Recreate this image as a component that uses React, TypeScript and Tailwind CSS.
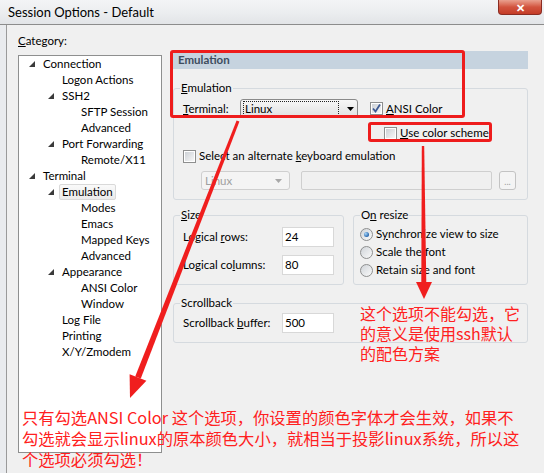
import React from "react";

const UI = "font-['Lato',sans-serif]";

function Tri() {
  return (
    <svg width="6" height="6" viewBox="0 0 6 6" className="block">
      <polygon points="6,0 6,6 0,6" fill="#3a3a3a" />
    </svg>
  );
}

type Item = { t: string; l: number; e?: boolean; sel?: boolean };
const items: Item[] = [
  { t: "Connection", l: 0, e: true },
  { t: "Logon Actions", l: 1 },
  { t: "SSH2", l: 1, e: true },
  { t: "SFTP Session", l: 2 },
  { t: "Advanced", l: 2 },
  { t: "Port Forwarding", l: 1, e: true },
  { t: "Remote/X11", l: 2 },
  { t: "Terminal", l: 0, e: true },
  { t: "Emulation", l: 1, e: true, sel: true },
  { t: "Modes", l: 2 },
  { t: "Emacs", l: 2 },
  { t: "Mapped Keys", l: 2 },
  { t: "Advanced", l: 2 },
  { t: "Appearance", l: 1, e: true },
  { t: "ANSI Color", l: 2 },
  { t: "Window", l: 2 },
  { t: "Log File", l: 1 },
  { t: "Printing", l: 1 },
  { t: "X/Y/Zmodem", l: 1 },
];

const indent = ["w-[10px]", "w-[29px]", "w-[48px]"];

function Check({ checked = false }: { checked?: boolean }) {
  return (
    <span className="relative block w-[13px] h-[13px] shrink-0 border border-[#8e8f8f] bg-white">
      <span className="absolute inset-[1px] bg-gradient-to-br from-[#cdd1d6] to-[#f7f7f7]" />
      {checked && (
        <svg width="11" height="11" viewBox="0 0 11 11" className="absolute left-0 top-0">
          <path d="M2 5.5 L4.5 8.5 L9 1.5" stroke="#3d5a93" strokeWidth="1.8" fill="none" />
        </svg>
      )}
    </span>
  );
}

function Radio({ on = false }: { on?: boolean }) {
  return (
    <span className="relative block w-[13px] h-[13px] shrink-0 rounded-full border border-[#8e8f8f] bg-gradient-to-br from-[#d0d4d9] to-[#fafafa]">
      {on && (
        <span className="absolute left-[3px] top-[3px] w-[5px] h-[5px] rounded-full bg-[radial-gradient(circle_at_35%_35%,#a9d8fa,#1f5ea8_75%)]" />
      )}
    </span>
  );
}

function DownArrow({ color = "#000" }: { color?: string }) {
  return (
    <svg width="7" height="4" viewBox="0 0 7 4" className="block">
      <polygon points="0,0 7,0 3.5,4" fill={color} />
    </svg>
  );
}

function Input({ v }: { v: string }) {
  return (
    <div className="w-[52px] h-[20px] border border-[#d8d8d8] bg-white flex items-center pl-[2px] text-black">
      {v}
    </div>
  );
}

export default function App() {
  return (
    <div className={`relative w-[544px] h-[473px] overflow-hidden bg-[#e9ebee] ${UI} text-[11.5px] text-black`}>
      {/* Title bar */}
      <div className="relative h-[25px] border-b border-[#8c8c8c] bg-gradient-to-b from-[#f3f4f6] via-[#eceef0] to-[#e2e4e7] flex items-center pl-[8px]">
        <span className="text-[13px] leading-[16px] text-black">Session Options - Default</span>
        <div className="absolute right-[2px] top-0 w-[44px] h-[15px] rounded-b-[4px] border border-t-0 border-[#8a2c22] bg-gradient-to-b from-[#e9a08f] via-[#d2543f] to-[#c43c27] flex items-center justify-center">
          <span className="text-white text-[11px] leading-[11px] font-bold">✕</span>
        </div>
      </div>

      {/* Body */}
      <div className="ml-[6px] h-[448px] border-l border-[#9a9a9a] bg-[#f0f0f0] pl-[11px] pt-[8px] flex items-start gap-[10px]">
        {/* Left column */}
        <div className="w-[144px] flex flex-col">
          <div className="h-[16px] leading-[16px]">
            <span className="underline">C</span>ategory:
          </div>
          <div className="mt-[6px] h-[398px] border border-[#8e8f8f] bg-white">
            {items.map((it, i) => (
              <div key={i} className="h-[16px] flex items-center">
                <div className={`${indent[it.l]} shrink-0`} />
                <div className="w-[11px] shrink-0 flex items-center">{it.e && <Tri />}</div>
                <span
                  className={`h-[16px] leading-[14px] px-[2px] border rounded-[2px] whitespace-nowrap ${
                    it.sel ? "border-[#d9d9d9] bg-gradient-to-b from-[#fafafa] to-[#ebebeb]" : "border-transparent"
                  }`}
                >
                  {it.t}
                </span>
              </div>
            ))}
          </div>
        </div>

        {/* Right column */}
        <div className="mt-[18px] w-[356px] flex flex-col">
          <div className="h-[18px] bg-[#c6d3df] pl-[6px] flex items-center font-bold text-[#3d4c5e]">Emulation</div>

          <fieldset className="mt-[11px] ml-[1px] w-[355px] border border-[#d5dadf] rounded-[3px] pl-[9px] pb-[9px]">
            <legend className="-ml-[3px] px-[1px] leading-[16px]">
              <span className="underline">E</span>mulation
            </legend>
            <div className="mt-[3px] h-[19px] flex items-center">
              <div className="w-[57px]">
                <span className="underline">T</span>erminal:
              </div>
              <div className="w-[118px] h-[19px] border border-[#8a8a8a] rounded-[3px] bg-gradient-to-b from-[#f7f7f7] to-[#e1e1e1] flex items-center">
                <div className="ml-[2px] h-[15px] w-[96px] border border-dotted border-[#222] flex items-center pl-[1px] leading-[13px]">
                  Linux
                </div>
                <div className="ml-[8px]">
                  <DownArrow />
                </div>
              </div>
              <div className="ml-[12px]">
                <Check checked />
              </div>
              <span className="ml-[3px]">
                <span className="underline">A</span>NSI Color
              </span>
            </div>
            <div className="mt-[7px] h-[16px] flex items-center pl-[201px]">
              <Check />
              <span className="ml-[3px]">
                <span className="underline">U</span>se color scheme
              </span>
            </div>
            <div className="mt-[7px] h-[16px] flex items-center">
              <Check />
              <span className="ml-[3px]">
                Select an alternate <span className="underline">k</span>eyboard emulation
              </span>
            </div>
            <div className="mt-[7px] h-[19px] flex items-center pl-[18px]">
              <div className="w-[89px] h-[19px] border border-[#cfcfcf] rounded-[3px] bg-[#f4f4f4] flex items-center justify-between pl-[3px] pr-[7px] text-[#a0a0a0]">
                Linux
                <DownArrow color="#a8a8a8" />
              </div>
              <div className="ml-[11px] w-[191px] h-[19px] border border-[#cfcfcf] rounded-[2px] bg-[#f0f0f0]" />
              <div className="ml-[7px] w-[17px] h-[19px] border border-[#c3c3c3] rounded-[3px] bg-[#f4f4f4] flex items-end justify-center pb-[3px] text-[9px] leading-[9px] text-[#a0a0a0]">
                ...
              </div>
            </div>
          </fieldset>

          <div className="mt-[7px] ml-[1px] flex gap-[9px]">
            <fieldset className="w-[171px] border border-[#d5dadf] rounded-[3px] pl-[9px] pb-[9px]">
              <legend className="-ml-[3px] px-[1px] leading-[16px]">
                <span className="underline">S</span>ize
              </legend>
              <div className="mt-[4px] h-[20px] flex items-center">
                <div className="w-[99px]">
                  Logical <span className="underline">r</span>ows:
                </div>
                <Input v="24" />
              </div>
              <div className="mt-[8px] h-[20px] flex items-center">
                <div className="w-[99px]">
                  Logical co<span className="underline">l</span>umns:
                </div>
                <Input v="80" />
              </div>
            </fieldset>
            <fieldset className="w-[175px] border border-[#d5dadf] rounded-[3px] pl-[6px] pb-[3px]">
              <legend className="px-[1px] leading-[16px]">
                O<span className="underline">n</span> resize
              </legend>
              <div className="mt-[2px] h-[18px] flex items-center">
                <Radio on />
                <span className="ml-[3px]">
                  S<span className="underline">y</span>nchronize view to size
                </span>
              </div>
              <div className="h-[18px] flex items-center">
                <Radio />
                <span className="ml-[3px]">Scale the font</span>
              </div>
              <div className="h-[18px] flex items-center">
                <Radio />
                <span className="ml-[3px]">Retain size and font</span>
              </div>
            </fieldset>
          </div>

          <fieldset className="mt-[10px] ml-[1px] w-[355px] border border-[#d5dadf] rounded-[3px] pl-[9px] pb-[9px]">
            <legend className="-ml-[3px] px-[1px] leading-[16px]">Scrollback</legend>
            <div className="mt-[2px] h-[20px] flex items-center">
              <div className="w-[99px]">
                Scrollback <span className="underline">b</span>uffer:
              </div>
              <Input v="500" />
            </div>
          </fieldset>
        </div>
      </div>

      {/* Annotation boxes */}
      <div className="absolute left-[170px] top-[50px] w-[295px] h-[68px] border-[3px] border-[#ee1c1c] rounded-[3px]" />
      <div className="absolute left-[368px] top-[122px] w-[124px] h-[20px] border-[3px] border-[#ee1c1c] rounded-[3px]" />

      {/* Arrows */}
      <svg className="absolute left-0 top-0 pointer-events-none" width="544" height="473" viewBox="0 0 544 473">
        <polygon points="239.4,121.5 236.6,120.5 135.2,376.4 140.8,378.6" fill="#f01e1e" />
        <polygon points="146.4,380.8 129.6,374.2 130,398" fill="#f01e1e" />
        <polygon points="421.8,146 424.2,146 426.3,283 421.3,283" fill="#f01e1e" />
        <polygon points="416,282 432,282 424,299" fill="#f01e1e" />
      </svg>

      {/* Annotation texts */}
      <div className="absolute left-[360px] top-[303px] text-[16px] leading-[20px] text-[#ff2020] font-['Noto_Sans_CJK_SC',sans-serif] whitespace-nowrap">
        这个选项不能勾选，它
        <br />
        的意义是使用ssh默认
        <br />
        的配色方案
      </div>
      <div className="absolute left-[22px] top-[407px] text-[16.3px] leading-[21px] text-[#ff2020] font-['Noto_Sans_CJK_SC',sans-serif] whitespace-nowrap">
        只有勾选ANSI Color 这个选项，你设置的颜色字体才会生效，如果不
        <br />
        勾选就会显示linux的原本颜色大小，就相当于投影linux系统，所以这
        <br />
        个选项必须勾选！
      </div>
    </div>
  );
}
